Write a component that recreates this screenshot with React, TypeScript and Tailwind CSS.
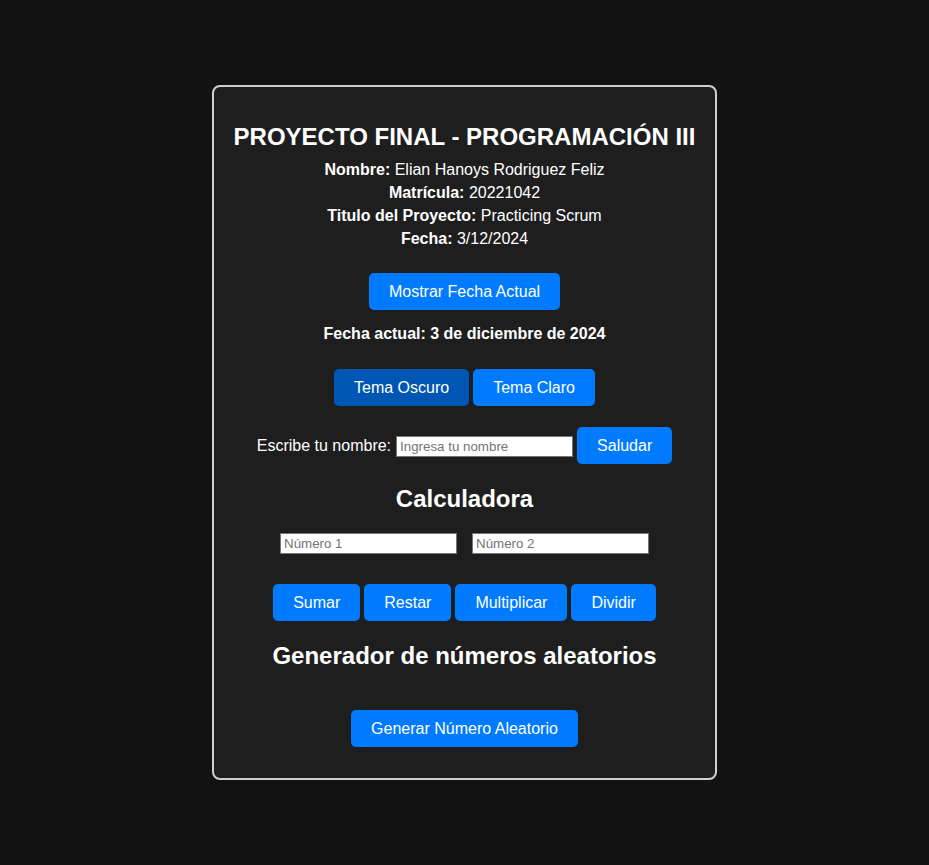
import React, { useState } from 'react';

const btn =
  'bg-[#007bff] text-white text-base leading-[17px] px-5 py-[10px] rounded-[5px] cursor-pointer hover:bg-[#0056b3]';

const inputCls =
  'w-[177px] h-[21px] bg-white text-black text-[13.33px] px-[3px] border border-[#767676] outline-none placeholder:text-[#757575]';

export default function App() {
  const [fecha, setFecha] = useState('3 de diciembre de 2024');
  const [nombre, setNombre] = useState('');
  const [n1, setN1] = useState('');
  const [n2, setN2] = useState('');

  const mostrarFecha = () => {
    setFecha(
      new Date().toLocaleDateString('es-ES', { day: 'numeric', month: 'long', year: 'numeric' })
    );
  };

  return (
    <div className="min-h-screen bg-[#121212] flex items-center justify-center font-['Liberation_Sans',Arial,sans-serif] text-white">
      <div className="w-[505px] bg-[#1e1e1e] border-2 border-[#cfcfcf] rounded-[8px] pt-[36px] pb-[31px] flex flex-col items-center text-center">
        <h1 className="text-2xl leading-[28px] font-bold">PROYECTO FINAL - PROGRAMACIÓN III</h1>

        <div className="mt-[7px] text-base leading-[23px]">
          <p><strong>Nombre:</strong> Elian Hanoys Rodriguez Feliz</p>
          <p><strong>Matrícula:</strong> 20221042</p>
          <p><strong>Titulo del Proyecto:</strong> Practicing Scrum</p>
          <p><strong>Fecha:</strong> 3/12/2024</p>
        </div>

        <button onClick={mostrarFecha} className={`${btn} mt-[23px]`}>
          Mostrar Fecha Actual
        </button>

        <p className="mt-[15px] text-base leading-[18px] font-bold">Fecha actual: {fecha}</p>

        <div className="mt-[26px] flex gap-1">
          <button className={`${btn} bg-[#0056b3]`}>Tema Oscuro</button>
          <button className={btn}>Tema Claro</button>
        </div>

        <div className="mt-[21px] flex items-center">
          <label className="text-base">Escribe tu nombre:</label>
          <input
            value={nombre}
            onChange={(e) => setNombre(e.target.value)}
            placeholder="Ingresa tu nombre"
            className={`${inputCls} ml-[5px] mt-[2px]`}
          />
          <button className={`${btn} ml-1`}>Saludar</button>
        </div>

        <h2 className="mt-[21px] text-2xl leading-[28px] font-bold">Calculadora</h2>

        <div className="mt-[20px] flex gap-[15px]">
          <input value={n1} onChange={(e) => setN1(e.target.value)} placeholder="Número 1" className={inputCls} />
          <input value={n2} onChange={(e) => setN2(e.target.value)} placeholder="Número 2" className={inputCls} />
        </div>

        <div className="mt-[30px] flex gap-1">
          <button className={btn}>Sumar</button>
          <button className={btn}>Restar</button>
          <button className={btn}>Multiplicar</button>
          <button className={btn}>Dividir</button>
        </div>

        <h2 className="mt-[21px] text-2xl leading-[28px] font-bold">Generador de números aleatorios</h2>

        <button className={`${btn} mt-[40px]`}>Generar Número Aleatorio</button>
      </div>
    </div>
  );
}
